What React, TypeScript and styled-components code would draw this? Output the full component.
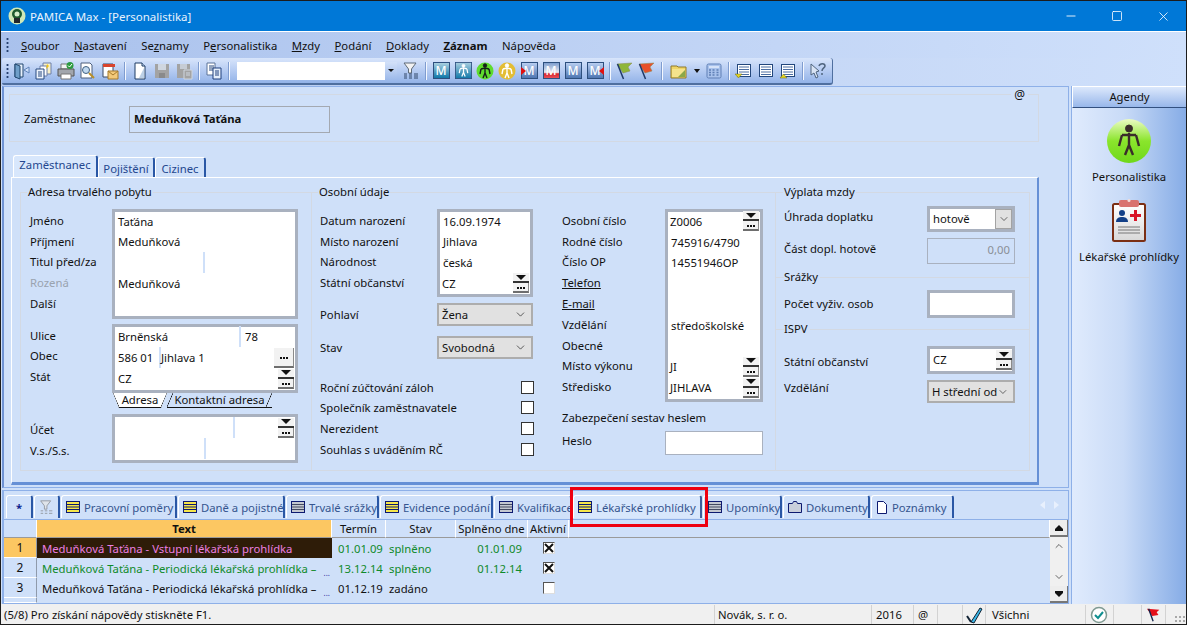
import React from 'react';
import styled, { createGlobalStyle } from 'styled-components';
import { ChevronDown, ChevronUp, Minus, Square, X } from 'lucide-react';

const GlobalStyle = createGlobalStyle`
  html, body { margin: 0; padding: 0; background: #fff; }
  * { box-sizing: border-box; }
  body { font-family: "Noto Sans", "Liberation Sans", sans-serif; font-size: 11.3px; color: #111; }
  fieldset { margin: 0; min-width: 0; }
`;

const panelBg = '#cfe0f9';
const groupLine = '#d3d9e3';

const Window = styled.div`
  width: 1187px;
  height: 625px;
  border: 1px solid #1c1c1c;
  display: flex;
  flex-direction: column;
  overflow: hidden;
  position: relative;
  background: ${panelBg};
`;

/* title bar */
const TitleBar = styled.header`
  height: 30px;
  background: #0078d7;
  color: #fff;
  display: flex;
  align-items: center;
  padding-left: 7px;
  flex-shrink: 0;
`;
const TitleText = styled.span`
  margin-left: 4px;
  font-size: 11.5px;
  color: #e8f2fc;
`;
const WinControls = styled.div`
  margin-left: auto;
  display: flex;
  height: 100%;
`;
const WinButton = styled.div`
  width: 46px;
  display: flex;
  align-items: center;
  justify-content: center;
  color: #fff;
`;

/* menu */
const MenuBar = styled.nav`
  height: 27px;
  flex-shrink: 0;
  border-top: 1px solid #fff;
  background: linear-gradient(90deg, #a9c1ec 0%, #bcd0f3 45%, #cfe0fb 100%);
  display: flex;
  align-items: center;
  padding-left: 5px;
`;
const Grip = styled.i`
  width: 3px;
  height: 16px;
  margin-right: 4px;
  background: radial-gradient(circle, #26406e 1px, transparent 1.2px) 0 0 / 3px 4px;
`;
const ToolGrip = styled(Grip)`
  margin-right: 2px;
`;
const MenuItem = styled.span<{ $bold?: boolean }>`
  margin-left: 8px;
  margin-right: 6.5px;
  font-weight: ${(p) => (p.$bold ? 700 : 400)};
`;

/* toolbar */
const ToolRow = styled.div`
  height: 28px;
  flex-shrink: 0;
  background: linear-gradient(90deg, #b4c9ef 0%, #c4d6f5 60%, #cfe0fb 100%);
  padding-left: 1px;
`;
const Toolbar = styled.div`
  width: 831px;
  height: 27px;
  border-radius: 2px 3px 3px 2px;
  border-right: 1px solid #4f6f9f;
  border-bottom: 2px solid #4f6f9f;
  background: linear-gradient(180deg, #d8e5fb 0%, #b9cef3 45%, #93b3e8 100%);
  display: flex;
  align-items: center;
  padding-left: 4px;
`;
const ToolBtn = styled.div<{ $w?: number }>`
  width: ${(p) => p.$w ?? 22}px;
  height: 22px;
  display: flex;
  align-items: center;
  justify-content: center;
  flex-shrink: 0;
`;
const ToolSep = styled.div`
  width: 8px;
  height: 18px;
  flex-shrink: 0;
  display: flex;
  justify-content: center;
  &::after { content: ''; width: 1px; height: 100%; background: #f4f8ff; box-shadow: -1px 0 0 #7f9ccf; }
`;
const ToolCombo = styled.div`
  width: 160px;
  height: 18px;
  margin: 0 3px 0 4px;
  background: #fff;
  display: flex;
  justify-content: flex-end;
  flex-shrink: 0;
`;
const ToolComboArrow = styled.div`
  width: 12px;
  background: linear-gradient(180deg, #d3e1f9, #9cb9ea);
  display: flex;
  align-items: center;
  justify-content: center;
  &::after { content: ''; border: 3px solid transparent; border-top: 3px solid #111; border-bottom: 0; }
`;
const MTile = styled.div<{ $fill: string }>`
  width: 17px;
  height: 17px;
  border: 1px solid #2d4f7e;
  background: ${(p) => p.$fill};
  color: #fff;
  font-size: 12px;
  line-height: 15px;
  font-weight: 500;
  text-align: center;
  position: relative;
`;
const MMark = styled.i<{ $side: 'left' | 'right' }>`
  position: absolute;
  top: 4px;
  ${(p) => p.$side}: -1px;
  border: 4px solid transparent;
  ${(p) => (p.$side === 'left' ? 'border-left: 5px solid #e01010; border-right: 0;' : 'border-right: 5px solid #e01010; border-left: 0;')}
`;
const MiniArrow = styled.div`
  border: 3px solid transparent;
  border-top: 4px solid #111;
  border-bottom: 0;
`;

/* page layout */
const Body = styled.div`
  flex: 1;
  min-height: 0;
  display: flex;
  padding-left: 1px;
`;
const LeftColumn = styled.div`
  width: 1067px;
  display: flex;
  flex-direction: column;
  gap: 2px;
`;
const MainPanel = styled.section`
  height: 402px;
  border: 1px solid #8eb0e8;
  border-left: 2px solid #6f93d4;
  background: ${panelBg};
  padding: 7px 29px 0 5px;
`;
const EmployeeFrame = styled.div`
  height: 48px;
  border: 1px solid ${groupLine};
  display: flex;
  align-items: center;
  padding: 0 0 0 14px;
  position: relative;
`;
const AtMark = styled.span`
  position: absolute;
  top: -7px;
  right: 10px;
  padding: 0 3px;
  background: ${panelBg};
  line-height: 14px;
  font-size: 12px;
`;
const EmployeeLabel = styled.span`
  width: 105px;
`;
const EmployeeName = styled.div`
  width: 201px;
  height: 27px;
  margin-top: 2px;
  border: 1px solid #a4a9b1;
  font-weight: 700;
  line-height: 24px;
  padding-left: 4px;
`;
const TopTabs = styled.div`
  display: flex;
  height: 22px;
  margin: 13px 0 0 4px;
`;
const TopTab = styled.div<{ $active?: boolean; $w: number }>`
  width: ${(p) => p.$w}px;
  border-top: 1px solid #fff;
  border-left: 1px solid #fff;
  border-right: 2px solid #2a57a5;
  border-radius: 3px 3px 0 0;
  color: #24478f;
  text-align: center;
  line-height: ${(p) => (p.$active ? 18 : 21)}px;
  background: ${(p) => (p.$active ? '#d8e7fc' : panelBg)};
  margin-top: ${(p) => (p.$active ? 0 : 2)}px;
`;
const TabPanel = styled.div`
  margin-left: 2px;
  height: 308px;
  width: 1028px;
  border-top: 1px solid #fff;
  border-left: 1px solid #fff;
  border-right: 2px solid #6690d6;
  border-bottom: 3px solid #6690d6;
  padding: 6px 0 0 8px;
  display: flex;
  align-items: flex-start;
`;
const Group = styled.fieldset<{ $w: number; $pad: number; $overlap?: boolean }>`
  width: ${(p) => p.$w}px;
  height: 287px;
  border: 1px solid ${groupLine};
  padding: 0 0 0 ${(p) => p.$pad}px;
  margin-left: ${(p) => (p.$overlap ? -1 : 0)}px;
`;
const Legend = styled.legend<{ $shift: number }>`
  padding: 0 1px;
  margin-left: ${(p) => p.$shift}px;
  line-height: 16px;
`;

const FormBlock = styled.div<{ $top: number; $label: number }>`
  display: grid;
  grid-template-columns: ${(p) => p.$label}px auto;
  justify-content: start;
  align-items: start;
  margin-top: ${(p) => p.$top}px;
`;
const Rows = styled.div<{ $h: number; $top?: number }>`
  display: grid;
  grid-auto-rows: ${(p) => p.$h}px;
  margin-top: ${(p) => p.$top ?? 0}px;
  align-items: center;
`;
const Label = styled.span<{ $muted?: boolean; $link?: boolean }>`
  display: block;
  white-space: nowrap;
  color: ${(p) => (p.$muted ? '#9aa3af' : '#111')};
  text-decoration: ${(p) => (p.$link ? 'underline' : 'none')};
`;
const FieldBox = styled.div<{ $w: number; $h: number }>`
  width: ${(p) => p.$w}px;
  height: ${(p) => p.$h}px;
  border: 3px solid #a9b1bf;
  background: #fff;
  position: relative;
`;
const FieldRow = styled.div`
  display: flex;
  align-items: center;
  height: 100%;
  padding-right: 1px;
`;
const Value = styled.span<{ $w?: number; $pad?: number }>`
  ${(p) => (p.$w ? `width: ${p.$w}px;` : 'flex: 1;')}
  padding-left: ${(p) => p.$pad ?? 3}px;
  white-space: nowrap;
  align-self: stretch;
  display: flex;
  align-items: center;
`;
const Gap = styled.span<{ $w?: number; $pad?: number }>`
  ${(p) => (p.$w ? `width: ${p.$w}px;` : 'flex: 1;')}
  border-left: 2px solid ${panelBg};
  padding-left: ${(p) => p.$pad ?? 4}px;
  align-self: stretch;
  display: flex;
  align-items: center;
  white-space: nowrap;
`;
const PickerWrap = styled.div`
  width: 16px;
  height: 20px;
  display: flex;
  flex-direction: column;
  flex-shrink: 0;
`;
const PickerTop = styled.div`
  flex: 1;
  background: #f2f2f2;
  border-bottom: 2px solid #333;
  display: flex;
  align-items: center;
  justify-content: center;
  &::after { content: ''; border: 4px solid transparent; border-top: 5px solid #111; border-bottom: 0; border-left-width: 5px; border-right-width: 5px; }
`;
const PickerDots = styled.div<{ $tall?: boolean }>`
  flex: 1;
  width: 16px;
  height: ${(p) => (p.$tall ? '20px' : 'auto')};
  background: #f2f2f2;
  border-right: 1px solid #8b8b8b;
  border-bottom: 2px solid #6e6e6e;
  display: flex;
  align-items: center;
  justify-content: center;
  gap: 1px;
  flex-shrink: 0;
  i { width: 2px; height: 2px; background: #111; margin-top: 2px; }
`;
const Dots = ({ tall }: { tall?: boolean }) => (
  <PickerDots $tall={tall}>
    <i />
    <i />
    <i />
  </PickerDots>
);
const Picker = () => (
  <PickerWrap>
    <PickerTop />
    <Dots />
  </PickerWrap>
);

const AddressTabs = styled.div`
  display: flex;
  height: 15px;
  margin-left: 1px;
`;
const AddressTab = styled.div<{ $active?: boolean; $w: number }>`
  width: ${(p) => p.$w}px;
  position: relative;
  text-align: center;
  line-height: 13px;
  border-bottom: 1px solid #111;
  background: ${(p) => (p.$active ? '#fff' : 'transparent')};
  clip-path: ${(p) => (p.$active ? 'polygon(0 0, 100% 0, calc(100% - 6px) 100%, 6px 100%)' : 'none')};
  &::before, &::after {
    content: '';
    position: absolute;
    top: 0;
    bottom: 0;
    width: 6px;
    background: linear-gradient(to top left, transparent calc(50% - 0.6px), #111 50%, transparent calc(50% + 0.6px));
  }
  &::before {
    left: 0;
    ${(p) => (p.$active ? 'transform: scaleX(-1);' : '')}
  }
  &::after {
    right: 0;
  }
`;

const TwoSides = styled.div`
  display: flex;
  gap: 28px;
`;
const Side = styled.div<{ $w: number }>`
  width: ${(p) => p.$w}px;
`;
const SelectBox = styled.div<{ $w?: number; $top?: number }>`
  width: ${(p) => p.$w ?? 96}px;
  height: 23px;
  margin-top: ${(p) => p.$top ?? 0}px;
  background: #e1e1e1;
  border: 2px solid #adadad;
  display: flex;
  align-items: center;
  justify-content: space-between;
  padding: 0 4px 0 3px;
  white-space: nowrap;
`;
const LineRow = styled.div<{ $top: number; $label: number; $lh: number }>`
  display: grid;
  grid-template-columns: ${(p) => p.$label}px auto;
  justify-content: start;
  align-items: start;
  margin-top: ${(p) => p.$top}px;
  line-height: ${(p) => p.$lh}px;
`;
const CheckList = styled.div`
  margin-top: 17px;
  display: grid;
  grid-auto-rows: 20.6px;
  align-items: center;
`;
const CheckRow = styled.div`
  display: flex;
  justify-content: space-between;
  align-items: center;
  width: 214px;
`;
const CheckSquare = styled.i`
  width: 13px;
  height: 13px;
  border: 1px solid #333;
  background: #fff;
`;
const SideCaption = styled.div`
  margin-top: 7px;
  line-height: 18px;
`;
const PasswordBox = styled.div`
  width: 98px;
  height: 24px;
  background: #fff;
  border: 1px solid #a9b1bf;
`;
const WhiteField = styled.div<{ $h: number; $border?: number }>`
  width: 88px;
  height: ${(p) => p.$h}px;
  border: ${(p) => p.$border ?? 3}px solid #a9b1bf;
  background: #fff;
  display: flex;
  align-items: center;
  line-height: 16px;
  padding-left: 3px;
`;
const ComboButton = styled.div`
  margin-left: auto;
  width: 17px;
  align-self: stretch;
  background: #e1e1e1;
  border: 1px solid #a3a3a3;
  display: flex;
  align-items: center;
  justify-content: center;
`;
const DisabledField = styled.div`
  width: 88px;
  height: 26px;
  border: 1px solid #a9b1bf;
  color: #8a8f97;
  text-align: right;
  padding-right: 4px;
  line-height: 22px;
`;
const SectionLine = styled.div<{ $top: number }>`
  display: flex;
  align-items: center;
  margin: ${(p) => p.$top}px 0 0 -8px;
  line-height: 16px;
  &::before { content: ''; width: 8px; height: 1px; background: ${groupLine}; }
  &::after { content: ''; flex: 1; height: 1px; margin-left: 2px; background: ${groupLine}; }
`;

/* bottom tabs + grid */
const BottomPanel = styled.section`
  flex: 1;
  min-height: 0;
  border: 1px solid #8eb0e8;
  border-left: 2px solid #8eb0e8;
  display: flex;
  flex-direction: column;
  position: relative;
`;
const BottomTabs = styled.div`
  height: 29px;
  padding: 4px 0 1px 2px;
  display: flex;
  gap: 1px;
  flex-shrink: 0;
  border-bottom: 1px solid #8eb0e8;
`;
const BottomTab = styled.div<{ $w: number; $active?: boolean }>`
  width: ${(p) => p.$w}px;
  border-top: 1px solid #fff;
  border-left: 1px solid #fff;
  border-right: 2px solid ${(p) => (p.$active ? '#3e5f9c' : '#2a57a5')};
  border-radius: 3px 3px 0 0;
  display: flex;
  align-items: center;
  justify-content: ${(p) => (p.$w < 30 ? 'center' : 'flex-start')};
  padding-left: ${(p) => (p.$w < 30 ? 0 : 4)}px;
  gap: 4px;
  color: #35558f;
  overflow: hidden;
  white-space: nowrap;
  background: ${(p) => (p.$active ? '#d8e7fc' : panelBg)};
`;
const Star = styled.span`
  color: #0b1f8f;
  font-weight: 700;
`;
const TabArrows = styled.div`
  margin-left: auto;
  display: flex;
  gap: 9px;
  padding: 6px 9px 0 0;
`;
const TabArrow = styled.i<{ $dir: 'left' | 'right' }>`
  height: 0;
  border: 4px solid transparent;
  ${(p) => (p.$dir === 'left' ? 'border-right: 5px solid #e8f0fd; border-left: 0;' : 'border-left: 5px solid #e8f0fd; border-right: 0;')}
`;
const Highlight = styled.div`
  position: absolute;
  left: 566px;
  top: -4px;
  width: 138px;
  height: 40px;
  border: 3px solid #ee0010;
  pointer-events: none;
`;
const GridArea = styled.div`
  flex: 1;
  min-height: 0;
  display: flex;
`;
const Table = styled.div`
  flex: 1;
  display: grid;
  grid-template-columns: 33px 295px 54px 70px 72px 41px 1fr;
  grid-template-rows: 18px 20px 20px 20px 5px;
`;
const HeadCell = styled.div<{ $sel?: boolean }>`
  background: ${(p) => (p.$sel ? '#fcc762' : panelBg)};
  color: #111;
  font-weight: ${(p) => (p.$sel ? 700 : 400)};
  border-right: 1px solid #fff;
  border-bottom: 1px solid #9a9a9a;
  display: flex;
  align-items: center;
  justify-content: center;
  white-space: nowrap;
`;
const RowHead = styled.div<{ $sel?: boolean }>`
  background: ${(p) => (p.$sel ? '#fcc762' : panelBg)};
  border-right: 1px solid #8f9aab;
  border-bottom: 1px solid #fff;
  display: flex;
  align-items: center;
  justify-content: center;
  font-size: 12px;
`;
const TextCell = styled.div<{ $sel?: boolean; $color: string }>`
  background: ${(p) => (p.$sel ? '#2e1c08' : 'transparent')};
  color: ${(p) => p.$color};
  padding-left: 5px;
  white-space: nowrap;
  overflow: hidden;
  display: flex;
  align-items: center;
`;
const Clip = styled.span`
  margin-left: auto;
  margin-right: 2px;
  align-self: flex-end;
  font-size: 8px;
  line-height: 10px;
  color: #1f2f9f;
`;
const Cell = styled.div<{ $color: string; $align?: string; $pad?: number }>`
  color: ${(p) => p.$color};
  padding: 0 ${(p) => p.$pad ?? 0}px;
  display: flex;
  align-items: center;
  justify-content: ${(p) => p.$align ?? 'flex-start'};
  white-space: nowrap;
`;
const GridCheck = styled.i`
  width: 12px;
  height: 12px;
  background: #fff;
  border: 1px solid #555;
  border-right-color: #ddd;
  border-bottom-color: #ddd;
  display: flex;
  align-items: center;
  justify-content: center;
`;
const ScrollBar = styled.div`
  width: 18px;
  background: #f0f0f0;
  display: flex;
  flex-direction: column;
  align-items: center;
`;
const ScrollEnd = styled.div`
  width: 100%;
  height: 17px;
  background: #ededed;
  border-right: 1px solid #777;
  border-bottom: 2px solid #777;
  display: flex;
  align-items: center;
  justify-content: center;
  font-size: 9px;
  flex-direction: column;
`;
const ScrollEndBar = styled.i`
  width: 8px;
  height: 2px;
  background: #111;
`;
const ScrollEndTri = styled.i<{ $up?: boolean }>`
  border: 4px solid transparent;
  ${(p) => (p.$up ? 'border-bottom: 4px solid #111; border-top: 0;' : 'border-top: 4px solid #111; border-bottom: 0;')}
`;
const ScrollMid = styled.div`
  flex: 1;
  display: flex;
  flex-direction: column;
  justify-content: space-between;
  padding: 3px 0;
  color: #666;
`;

/* right side */
const AgendaPanel = styled.aside`
  width: 116px;
  margin-left: 2px;
  border-left: 1px solid #8eb0e8;
  background: linear-gradient(90deg, #e0ebfd 0%, #c9dbf7 45%, #86ace6 100%);
  display: flex;
  flex-direction: column;
  align-items: center;
`;
const AgendaHead = styled.div`
  width: 100%;
  height: 22px;
  border-top: 1px solid #fff;
  border-left: 1px solid #fff;
  border-bottom: 1px solid #33507f;
  background: linear-gradient(180deg, #dce8fc, #98b7ea);
  text-align: center;
  line-height: 20px;
`;
const AgendaItem = styled.div<{ $top: number; $gap: number }>`
  margin-top: ${(p) => p.$top}px;
  display: flex;
  flex-direction: column;
  align-items: center;
  gap: ${(p) => p.$gap}px;
  white-space: nowrap;
`;

/* status bar */
const StatusBar = styled.footer`
  height: 20px;
  flex-shrink: 0;
  background: #f0f0f0;
  display: flex;
  align-items: stretch;
  line-height: 20px;
  padding-top: 1px;
`;
const StatusCell = styled.div<{ $w?: number; $pad?: number }>`
  ${(p) => (p.$w ? `width: ${p.$w}px;` : 'flex: 1;')}
  padding-left: ${(p) => p.$pad ?? 4}px;
  border-right: 1px solid #d2d2d2;
  display: flex;
  align-items: center;
  white-space: nowrap;
  flex-shrink: 0;
`;
const StatusGrip = styled.div`
  flex: 1;
  background: radial-gradient(circle, #a8a8a8 1px, transparent 1.2px) 0 0 / 4px 4px;
  margin: 10px 1px 0 8px;
`;

/* icons */
const DoorIcon = () => (
  <svg width="18" height="18" viewBox="0 0 18 18">
    <path d="M2 2h8v13H2z" fill="#e7f0fb" stroke="#21476f" />
    <path d="M2 2l5 2v13l-5-2z" fill="#6f9fc9" stroke="#21476f" />
    <path d="M16 5l-5 3 5 3z" fill="#cfe0f9" stroke="#5d82b8" />
  </svg>
);
const DocsIcon = () => (
  <svg width="18" height="18" viewBox="0 0 18 18">
    <path d="M8 1h8v11H8z" fill="#f6efc9" stroke="#6c7ea8" />
    <path d="M5 4h7v10H5z" fill="#fff" stroke="#6c7ea8" />
    <path d="M1 7h8v10H1z" fill="#eef4fd" stroke="#27497e" />
    <path d="M3 10h4M3 12h4M3 14h4" stroke="#27497e" />
    <path d="M12 2l2 2-3 3z" fill="#f1c40f" />
  </svg>
);
const PrinterIcon = () => (
  <svg width="18" height="18" viewBox="0 0 18 18">
    <path d="M4 2h9v5H4z" fill="#f4f4f4" stroke="#777" />
    <path d="M1 7h16v7H1z" fill="#a2a6ad" stroke="#555" />
    <path d="M4 12h10v5H4z" fill="#fff" stroke="#777" />
    <circle cx="13" cy="3.500" r="3.500" fill="#2c9a3e" />
    <path d="M11 3.500l1.500 1.500 2.500-3" stroke="#fff" fill="none" />
  </svg>
);
const PreviewIcon = () => (
  <svg width="18" height="18" viewBox="0 0 18 18">
    <path d="M2 1h9l2 2v13H2z" fill="#fff" stroke="#4d5f7c" />
    <circle cx="7" cy="8" r="3.500" fill="#bfd8f0" stroke="#3f5f80" />
    <path d="M10 11l5 5" stroke="#b98f2a" strokeWidth="2" />
  </svg>
);
const MailIcon = () => (
  <svg width="18" height="18" viewBox="0 0 18 18">
    <path d="M2 2h10v13H2z" fill="#fff" stroke="#3a4a66" />
    <path d="M2 2h12v3H2z" fill="#d8442e" />
    <path d="M7 9h10v8H7z" fill="#f2c97a" stroke="#a67a2c" />
    <path d="M7 9l5 4 5-4" fill="none" stroke="#a67a2c" />
  </svg>
);
const PageIcon = () => (
  <svg width="18" height="18" viewBox="0 0 18 18">
    <path d="M4 1h7l3 3v13H4z" fill="#fff" stroke="#1f3c64" />
    <path d="M11 1v3h3" fill="#cfe0f9" stroke="#1f3c64" />
    <path d="M13 6v10H8z" fill="#bcd0e6" />
  </svg>
);
const SaveIcon = () => (
  <svg width="18" height="18" viewBox="0 0 18 18">
    <path d="M2 2h14v14H2z" fill="#a3a3a3" />
    <path d="M5 2h8v6H5z" fill="#cfd6e0" />
    <path d="M6 11h6v5H6z" fill="#8a8a8a" />
  </svg>
);
const SaveAsIcon = () => (
  <svg width="18" height="18" viewBox="0 0 18 18">
    <path d="M2 2h13v14H2z" fill="#a3a3a3" />
    <path d="M5 2h7v5H5z" fill="#c6ccd5" />
    <path d="M9 8h8v9H9z" fill="#a3a3a3" stroke="#cfd6e0" />
    <path d="M11 11h4M11 13h4" stroke="#cfd6e0" />
  </svg>
);
const CopyIcon = () => (
  <svg width="18" height="18" viewBox="0 0 18 18">
    <path d="M2 1h8v12H2z" fill="#fff" stroke="#5b7298" />
    <path d="M4 4h5M4 6h5M4 8h5" stroke="#27497e" />
    <path d="M8 6h8v11H8z" fill="#e4eefb" stroke="#1e3f7d" />
    <path d="M10 9h4M10 11h4M10 13h4" stroke="#1e3f7d" />
  </svg>
);
const FilterIcon = () => (
  <svg width="18" height="18" viewBox="0 0 18 18">
    <path d="M2 1h12L9.500 7v4h-3V7z" fill="#f2f2f2" stroke="#5f6b78" />
    <path d="M2 12h3M7 12h3M12 12h4M2 14h3M7 14h3M12 14h4M2 16h3M7 16h3M12 16h4" stroke="#33486a" />
  </svg>
);
const Figure = ({ color }: { color: string }) => (
  <g fill={color} stroke={color}>
    <circle cx="10" cy="4.500" r="1.700" />
    <path d="M10 7v6M6 8l4-1 4 1M6 8l-1 5M14 8l1 5M10 12l-2 5M10 12l2 5" fill="none" strokeWidth="1.400" />
  </g>
);
const PersonRound = ({ bg, color }: { bg: string; color: string }) => (
  <svg width="20" height="20" viewBox="0 0 20 20">
    <circle cx="10" cy="10" r="8.500" fill={bg} />
    <Figure color={color} />
  </svg>
);
const PersonSquare = () => (
  <svg width="17" height="17" viewBox="0 0 20 20">
    <defs>
      <linearGradient id="tealTile" x1="0" y1="0" x2="0" y2="1">
        <stop offset="0" stopColor="#a9cfe0" />
        <stop offset="1" stopColor="#0f77a8" />
      </linearGradient>
    </defs>
    <rect x="0.500" y="0.500" width="19" height="19" fill="url(#tealTile)" stroke="#2d4f7e" />
    <Figure color="#fff" />
  </svg>
);
const FlagIcon = ({ color }: { color: string }) => (
  <svg width="18" height="18" viewBox="0 0 18 18">
    <path d="M1 2l15-1-4 4 2 4-7 2z" fill={color} stroke="#8a8a50" strokeWidth="0.500" />
    <path d="M1.500 2l6 15" stroke="#1e3868" strokeWidth="1.500" />
  </svg>
);
const FolderIcon = () => (
  <svg width="18" height="18" viewBox="0 0 18 18">
    <path d="M1 4h6l1 1h8v11H1z" fill="#efd566" stroke="#8f7a2c" />
    <path d="M2 7h13v8H2z" fill="#f5e48c" />
    <path d="M8 15l7-7v7z" fill="#8ba84a" />
  </svg>
);
const CalcIcon = () => (
  <svg width="16" height="16" viewBox="0 0 16 16">
    <rect x="1" y="1" width="14" height="14" rx="1.500" fill="#a9c2ec" stroke="#5f7fb5" />
    <path d="M3 3h10v2H3z" fill="#d5e2f8" />
    <path d="M3 7h2M6.500 7h2M10.500 7h2M3 9.500h2M6.500 9.500h2M10.500 9.500h2M3 12h2M6.500 12h2M10.500 12h2" stroke="#5f7fb5" strokeWidth="1.500" />
  </svg>
);
const ListIcon = ({ mark }: { mark?: 'down' | 'up' }) => (
  <svg width="18" height="18" viewBox="0 0 18 18">
    <rect x="2.500" y="2.500" width="13" height="12" fill="#fff" stroke="#23477c" />
    <path d="M4 5h10M4 7.500h10M4 10h10M4 12.500h10" stroke="#4d6fa3" />
    {mark === 'down' && <path d="M0 12h7l-3.500 4z" fill="#e3d21e" stroke="#6b6a20" strokeWidth="0.500" />}
    {mark === 'up' && <path d="M1 16h7l-3.500-4z" fill="#e3d21e" stroke="#6b6a20" strokeWidth="0.500" />}
  </svg>
);
const HelpIcon = () => (
  <svg width="18" height="18" viewBox="0 0 18 18">
    <path d="M2 2l8 7-3 1 2 5-2 1-2-5-3 2z" fill="#d9e4f5" stroke="#50657f" />
    <path d="M10 4c1-3 6-3 6 0 0 2-3 2-3 5M13 11v2" fill="none" stroke="#50657f" strokeWidth="1.500" />
  </svg>
);
const LinesIcon = ({ fill, stripe }: { fill: string; stripe: string }) => (
  <svg width="14" height="12" viewBox="0 0 14 12" style={{ flexShrink: 0 }}>
    <rect x="0.500" y="0.500" width="13" height="11" fill={fill} stroke="#0d1a70" />
    <path d="M1 3.500h12M1 6h12M1 8.500h12" stroke={stripe} />
  </svg>
);
const FolderTabIcon = () => (
  <svg width="14" height="12" viewBox="0 0 14 12" style={{ flexShrink: 0 }}>
    <path d="M.5 2.500h4l1-2h3l1 2h4v9H.5z" fill="#c9cfdb" stroke="#0d1a70" />
  </svg>
);
const NoteTabIcon = () => (
  <svg width="12" height="13" viewBox="0 0 12 13" style={{ flexShrink: 0 }}>
    <path d="M1.500.5h6l3 3v9h-9z" fill="#fff" stroke="#0d1a70" />
  </svg>
);
const FilterTabIcon = () => (
  <svg width="15" height="15" viewBox="0 0 18 18">
    <path d="M2 1h12L9.500 7v4h-3V7z" fill="#dfe4ea" stroke="#8a8f96" />
    <path d="M2 13h3M7 13h3M12 13h4M2 16h3M7 16h3M12 16h4" stroke="#8a8f96" />
  </svg>
);
const AppLogo = () => (
  <svg width="18" height="18" viewBox="0 0 18 18">
    <circle cx="9" cy="9" r="8.500" fill="#cfe8b8" />
    <circle cx="9" cy="7" r="5" fill="#1d5a2f" />
    <circle cx="9" cy="7" r="2.500" fill="#d6eecb" />
    <rect x="6" y="11" width="6" height="5" fill="#23262a" />
  </svg>
);
const XMark = () => (
  <svg width="10" height="10" viewBox="0 0 10 10">
    <path d="M1 1l8 8M9 1l-8 8" stroke="#111" strokeWidth="2" />
  </svg>
);
const CheckPen = () => (
  <svg width="18" height="18" viewBox="0 0 18 18">
    <path d="M6 16L15 2l2 1-8 14z" fill="#39b6e6" stroke="#123" />
    <path d="M2 10l4 6" stroke="#123" strokeWidth="2" />
  </svg>
);
const RoundCheck = () => (
  <svg width="18" height="18" viewBox="0 0 18 18">
    <circle cx="9" cy="9" r="7.500" fill="#fff" stroke="#7f9a92" strokeWidth="1.500" />
    <path d="M5 9l3 3 5-6" fill="none" stroke="#0f8f8f" strokeWidth="2" />
  </svg>
);
const StatusFlag = () => (
  <svg width="16" height="18" viewBox="0 0 18 18">
    <path d="M1 2l14 1-3 3 2 3-7 1z" fill="#e5101a" />
    <path d="M3 2l5 14" stroke="#10204a" strokeWidth="1.500" />
  </svg>
);
const AgendaPerson = () => (
  <svg width="46" height="46" viewBox="0 0 46 46">
    <defs>
      <linearGradient id="agendaGreen" x1="0" y1="0" x2="0" y2="1">
        <stop offset="0" stopColor="#ecfbc4" />
        <stop offset="0.500" stopColor="#8ae52c" />
        <stop offset="1" stopColor="#6fd81a" />
      </linearGradient>
    </defs>
    <circle cx="23" cy="23" r="22" fill="url(#agendaGreen)" />
    <g fill="#3a2d2a" stroke="#3a2d2a">
      <circle cx="23" cy="10.500" r="3.500" />
      <path d="M23 15v14M16 17h14M16 17l-3 11M30 17l3 11M23 27l-4 10M23 27l4 10" fill="none" strokeWidth="2.400" />
    </g>
  </svg>
);
const ClipboardIcon = () => (
  <svg width="36" height="44" viewBox="0 0 36 44">
    <defs>
      <linearGradient id="clipPaper" x1="0" y1="0" x2="0" y2="1">
        <stop offset="0" stopColor="#ffffff" />
        <stop offset="1" stopColor="#d8d8d8" />
      </linearGradient>
    </defs>
    <rect x="2" y="6" width="32" height="37" rx="1.500" fill="url(#clipPaper)" stroke="#7b2f14" strokeWidth="2" />
    <rect x="8" y="2" width="20" height="7" rx="2" fill="#d9726e" />
    <circle cx="18" cy="2.500" r="1.500" fill="#f4dcd8" />
    <circle cx="11" cy="15" r="3" fill="#123f87" />
    <path d="M5 24c0-4 3-5 6-5s6 1 6 5z" fill="#123f87" />
    <path d="M19 16h4v-4h3v4h4v3h-4v4h-3v-4h-4z" fill="#d81528" />
    <path d="M7 29h22M7 32h22M7 35h22" stroke="#777" />
  </svg>
);

const menu: [string, string, string, boolean?][] = [
  ['', 'S', 'oubor'],
  ['', 'N', 'astavení'],
  ['Se', 'z', 'namy'],
  ['P', 'e', 'rsonalistika'],
  ['', 'M', 'zdy'],
  ['', 'P', 'odání'],
  ['', 'D', 'oklady'],
  ['', 'Z', 'áznam', true],
  ['Náp', 'o', 'věda'],
];

const yellow = { fill: '#f6e64a', stripe: '#0d1a70' };
const gray = { fill: '#c4c8d0', stripe: '#444a60' };

const tileBlue = 'linear-gradient(180deg, #b7cdf0, #4e76b2)';
const tileTeal = 'linear-gradient(180deg, #a9cfe0, #0f77a8)';
const tileRed = 'linear-gradient(180deg, #7f9fcf 0%, #e8e8f0 62%, #d8252c 72%, #e8505a 100%)';

const tabs = [
  { t: 'Pracovní poměry', w: 116, icon: yellow },
  { t: 'Daně a pojistné', w: 107, icon: yellow },
  { t: 'Trvalé srážky', w: 93, icon: gray },
  { t: 'Evidence podání', w: 113, icon: yellow },
  { t: 'Kvalifikace', w: 78, icon: gray },
];

const gridRows = [
  { n: '1', sel: true, color: '#0f8a2a', textColor: '#ec7fe0', text: 'Meduňková Taťána - Vstupní lékařská prohlídka', term: '01.01.09', stav: 'splněno', done: '01.01.09', on: true },
  { n: '2', color: '#0f8a2a', textColor: '#0f8a2a', text: 'Meduňková Taťána - Periodická lékařská prohlídka –', clip: true, term: '13.12.14', stav: 'splněno', done: '01.12.14', on: true },
  { n: '3', color: '#111', textColor: '#111', text: 'Meduňková Taťána - Periodická lékařská prohlídka –', clip: true, term: '01.12.19', stav: 'zadáno', done: '', on: false },
];

const App = () => (
  <>
    <GlobalStyle />
    <Window>
      <TitleBar>
        <AppLogo />
        <TitleText>PAMICA Max - [Personalistika]</TitleText>
        <WinControls>
          <WinButton><Minus size={14} strokeWidth={1.5} /></WinButton>
          <WinButton><Square size={12} strokeWidth={1.6} /></WinButton>
          <WinButton><X size={15} strokeWidth={1.3} /></WinButton>
        </WinControls>
      </TitleBar>

      <MenuBar>
        <Grip />
        {menu.map(([a, u, b, bold]) => (
          <MenuItem key={a + u + b} $bold={bold}>
            {a}<u>{u}</u>{b}
          </MenuItem>
        ))}
      </MenuBar>

      <ToolRow>
        <Toolbar>
          <ToolGrip />
          <ToolBtn><DoorIcon /></ToolBtn>
          <ToolBtn><DocsIcon /></ToolBtn>
          <ToolBtn><PrinterIcon /></ToolBtn>
          <ToolBtn><PreviewIcon /></ToolBtn>
          <ToolBtn><MailIcon /></ToolBtn>
          <ToolSep />
          <ToolBtn><PageIcon /></ToolBtn>
          <ToolBtn><SaveIcon /></ToolBtn>
          <ToolBtn><SaveAsIcon /></ToolBtn>
          <ToolSep />
          <ToolBtn><CopyIcon /></ToolBtn>
          <ToolSep />
          <ToolCombo><ToolComboArrow /></ToolCombo>
          <ToolBtn><FilterIcon /></ToolBtn>
          <ToolSep />
          <ToolBtn><MTile $fill={tileTeal}>M</MTile></ToolBtn>
          <ToolBtn><PersonSquare /></ToolBtn>
          <ToolBtn><PersonRound bg="#5fdc2e" color="#16201a" /></ToolBtn>
          <ToolBtn><PersonRound bg="#e3bd35" color="#fff" /></ToolBtn>
          <ToolBtn><MTile $fill={tileBlue}>M<MMark $side="left" /></MTile></ToolBtn>
          <ToolBtn><MTile $fill={tileRed}>M</MTile></ToolBtn>
          <ToolBtn><MTile $fill={tileBlue}>M</MTile></ToolBtn>
          <ToolBtn><MTile $fill={tileBlue}>M<MMark $side="right" /></MTile></ToolBtn>
          <ToolSep />
          <ToolBtn><FlagIcon color="#8fb63a" /></ToolBtn>
          <ToolBtn><FlagIcon color="#e8502a" /></ToolBtn>
          <ToolSep />
          <ToolBtn $w={25}><FolderIcon /></ToolBtn>
          <ToolBtn $w={12}><MiniArrow /></ToolBtn>
          <ToolBtn><CalcIcon /></ToolBtn>
          <ToolSep />
          <ToolBtn><ListIcon mark="down" /></ToolBtn>
          <ToolBtn><ListIcon /></ToolBtn>
          <ToolBtn><ListIcon mark="up" /></ToolBtn>
          <ToolSep />
          <ToolBtn><HelpIcon /></ToolBtn>
        </Toolbar>
      </ToolRow>

      <Body>
        <LeftColumn>
          <MainPanel>
            <EmployeeFrame>
              <AtMark>@</AtMark>
              <EmployeeLabel>Zaměstnanec</EmployeeLabel>
              <EmployeeName>Meduňková Taťána</EmployeeName>
            </EmployeeFrame>

            <TopTabs>
              <TopTab $active $w={85}>Zaměstnanec</TopTab>
              <TopTab $w={57}>Pojištění</TopTab>
              <TopTab $w={51}>Cizinec</TopTab>
            </TopTabs>

            <TabPanel>
              <Group $w={292} $pad={9}>
                <Legend $shift={-3}>Adresa trvalého pobytu</Legend>
                <FormBlock $top={9} $label={82}>
                  <Rows $h={20.6} $top={1.5}>
                    <Label>Jméno</Label>
                    <Label>Příjmení</Label>
                    <Label>Titul před/za</Label>
                    <Label $muted>Rozená</Label>
                    <Label>Další</Label>
                  </Rows>
                  <FieldBox $w={186} $h={110}>
                    <Rows $h={20.6} $top={-1}>
                      <FieldRow><Value>Taťána</Value></FieldRow>
                      <FieldRow><Value>Meduňková</Value></FieldRow>
                      <FieldRow><Value $w={88} /><Gap /></FieldRow>
                      <FieldRow><Value>Meduňková</Value></FieldRow>
                      <FieldRow />
                    </Rows>
                  </FieldBox>
                </FormBlock>
                <FormBlock $top={5} $label={82}>
                  <Rows $h={20.6} $top={1}>
                    <Label>Ulice</Label>
                    <Label>Obec</Label>
                    <Label>Stát</Label>
                  </Rows>
                  <div>
                    <FieldBox $w={186} $h={69}>
                      <Rows $h={21} $top={-1}>
                        <FieldRow><Value $w={124}>Brněnská</Value><Gap>78</Gap></FieldRow>
                        <FieldRow>
                          <Value $w={44}>586 01</Value>
                          <Gap $w={115} $pad={0}>Jihlava 1</Gap>
                          <Dots tall />
                        </FieldRow>
                        <FieldRow><Value>CZ</Value><Picker /></FieldRow>
                      </Rows>
                    </FieldBox>
                    <AddressTabs>
                      <AddressTab $active $w={54}>Adresa</AddressTab>
                      <AddressTab $w={105}>Kontaktní adresa</AddressTab>
                    </AddressTabs>
                  </div>
                </FormBlock>
                <FormBlock $top={6} $label={82}>
                  <Rows $h={21} $top={5}>
                    <Label>Účet</Label>
                    <Label>V.s./S.s.</Label>
                  </Rows>
                  <FieldBox $w={186} $h={49}>
                    <Rows $h={21}>
                      <FieldRow><Value $w={118} /><Gap /><Picker /></FieldRow>
                      <FieldRow><Value $w={89} /><Gap /></FieldRow>
                    </Rows>
                  </FieldBox>
                </FormBlock>
              </Group>

              <Group $w={465} $pad={8} $overlap>
                <Legend $shift={-2}>Osobní údaje</Legend>
                <TwoSides>
                  <Side $w={214}>
                    <FormBlock $top={9} $label={117}>
                      <Rows $h={20.6} $top={1.5}>
                        <Label>Datum narození</Label>
                        <Label>Místo narození</Label>
                        <Label>Národnost</Label>
                        <Label>Státní občanství</Label>
                      </Rows>
                      <FieldBox $w={96} $h={88}>
                        <Rows $h={20.6} $top={-1}>
                          <FieldRow><Value>16.09.1974</Value></FieldRow>
                          <FieldRow><Value>Jihlava</Value></FieldRow>
                          <FieldRow><Value>česká</Value></FieldRow>
                          <FieldRow><Value $pad={2}>CZ</Value><Picker /></FieldRow>
                        </Rows>
                      </FieldBox>
                    </FormBlock>
                    <LineRow $top={6} $label={117} $lh={24}>
                      <Label>Pohlaví</Label>
                      <SelectBox>Žena<ChevronDown size={13} strokeWidth={1.2} /></SelectBox>
                    </LineRow>
                    <LineRow $top={9} $label={117} $lh={24}>
                      <Label>Stav</Label>
                      <SelectBox>Svobodná<ChevronDown size={13} strokeWidth={1.2} /></SelectBox>
                    </LineRow>
                    <CheckList>
                      <CheckRow><Label>Roční zúčtování záloh</Label><CheckSquare /></CheckRow>
                      <CheckRow><Label>Společník zaměstnavatele</Label><CheckSquare /></CheckRow>
                      <CheckRow><Label>Nerezident</Label><CheckSquare /></CheckRow>
                      <CheckRow><Label>Souhlas s uváděním RČ</Label><CheckSquare /></CheckRow>
                    </CheckList>
                  </Side>
                  <Side $w={201}>
                    <FormBlock $top={9} $label={103}>
                      <Rows $h={20.8} $top={1}>
                        <Label>Osobní číslo</Label>
                        <Label>Rodné číslo</Label>
                        <Label>Číslo OP</Label>
                        <Label $link>Telefon</Label>
                        <Label $link>E-mail</Label>
                        <Label>Vzdělání</Label>
                        <Label>Obecné</Label>
                        <Label>Místo výkonu</Label>
                        <Label>Středisko</Label>
                      </Rows>
                      <FieldBox $w={98} $h={193}>
                        <Rows $h={20.8} $top={-1}>
                          <FieldRow><Value $pad={2}>Z0006</Value><Picker /></FieldRow>
                          <FieldRow><Value>745916/4790</Value></FieldRow>
                          <FieldRow><Value>14551946OP</Value></FieldRow>
                          <FieldRow />
                          <FieldRow />
                          <FieldRow><Value>středoškolské</Value></FieldRow>
                          <FieldRow />
                          <FieldRow><Value $pad={2}>JI</Value><Picker /></FieldRow>
                          <FieldRow><Value $pad={2}>JIHLAVA</Value><Picker /></FieldRow>
                        </Rows>
                      </FieldBox>
                    </FormBlock>
                    <SideCaption>Zabezpečení sestav heslem</SideCaption>
                    <LineRow $top={4} $label={103} $lh={20}>
                      <Label>Heslo</Label>
                      <PasswordBox />
                    </LineRow>
                  </Side>
                </TwoSides>
              </Group>

              <Group $w={255} $pad={8} $overlap>
                <Legend $shift={-1}>Výplata mzdy</Legend>
                <LineRow $top={6} $label={143} $lh={22}>
                  <Label>Úhrada doplatku</Label>
                  <WhiteField $h={26}>hotově<ComboButton><ChevronDown size={12} strokeWidth={1.2} /></ComboButton></WhiteField>
                </LineRow>
                <LineRow $top={6} $label={143} $lh={22}>
                  <Label>Část dopl. hotově</Label>
                  <DisabledField>0,00</DisabledField>
                </LineRow>
                <SectionLine $top={5}>Srážky</SectionLine>
                <LineRow $top={5} $label={143} $lh={28}>
                  <Label>Počet vyživ. osob</Label>
                  <WhiteField $h={28} />
                </LineRow>
                <SectionLine $top={3}>ISPV</SectionLine>
                <LineRow $top={9} $label={143} $lh={32}>
                  <Label>Státní občanství</Label>
                  <WhiteField $h={28}>CZ<span style={{ flex: 1 }} /><Picker /></WhiteField>
                </LineRow>
                <LineRow $top={2} $label={143} $lh={16}>
                  <Label>Vzdělání</Label>
                  <SelectBox $w={88}>H střední od<ChevronDown size={12} strokeWidth={1.2} /></SelectBox>
                </LineRow>
              </Group>
            </TabPanel>
          </MainPanel>

          <BottomPanel>
            <BottomTabs>
              <BottomTab $w={27}><Star>*</Star></BottomTab>
              <BottomTab $w={26}><FilterTabIcon /></BottomTab>
              {tabs.map((t) => (
                <BottomTab key={t.t} $w={t.w}>
                  <LinesIcon fill={t.icon.fill} stripe={t.icon.stripe} />
                  {t.t}
                </BottomTab>
              ))}
              <BottomTab $active $w={129}>
                <LinesIcon fill={yellow.fill} stripe={yellow.stripe} />
                Lékařské prohlídky
              </BottomTab>
              <BottomTab $w={79}><LinesIcon fill={gray.fill} stripe={gray.stripe} />Upomínky</BottomTab>
              <BottomTab $w={87}><FolderTabIcon />Dokumenty</BottomTab>
              <BottomTab $w={83}><NoteTabIcon />Poznámky</BottomTab>
              <TabArrows>
                <TabArrow $dir="left" />
                <TabArrow $dir="right" />
              </TabArrows>
            </BottomTabs>
            <Highlight />
            <GridArea>
              <Table>
                <HeadCell />
                <HeadCell $sel>Text</HeadCell>
                <HeadCell>Termín</HeadCell>
                <HeadCell>Stav</HeadCell>
                <HeadCell>Splněno dne</HeadCell>
                <HeadCell>Aktivní</HeadCell>
                <HeadCell />
                {gridRows.map((r) => (
                  <React.Fragment key={r.n}>
                    <RowHead $sel={r.sel}>{r.n}</RowHead>
                    <TextCell $sel={r.sel} $color={r.textColor}>
                      {r.text}
                      {r.clip && <Clip>...</Clip>}
                    </TextCell>
                    <Cell $color={r.color} $pad={6}>{r.term}</Cell>
                    <Cell $color={r.color} $pad={3}>{r.stav}</Cell>
                    <Cell $color={r.color} $align="flex-end" $pad={6}>{r.done}</Cell>
                    <Cell $color={r.color} $align="center">
                      <GridCheck>{r.on && <XMark />}</GridCheck>
                    </Cell>
                    <div />
                  </React.Fragment>
                ))}
                <RowHead />
              </Table>
              <ScrollBar>
                <ScrollEnd><ScrollEndTri $up /><ScrollEndBar /></ScrollEnd>
                <ScrollMid>
                  <ChevronUp size={12} strokeWidth={2} />
                  <ChevronDown size={12} strokeWidth={2} />
                </ScrollMid>
                <ScrollEnd><ScrollEndBar /><ScrollEndTri /></ScrollEnd>
              </ScrollBar>
            </GridArea>
          </BottomPanel>
        </LeftColumn>

        <AgendaPanel>
          <AgendaHead>Agendy</AgendaHead>
          <AgendaItem $top={10} $gap={5}>
            <AgendaPerson />
            Personalistika
          </AgendaItem>
          <AgendaItem $top={14} $gap={7}>
            <ClipboardIcon />
            Lékařské prohlídky
          </AgendaItem>
        </AgendaPanel>
      </Body>

      <StatusBar>
        <StatusCell $w={714} $pad={3}>(5/8) Pro získání nápovědy stiskněte F1.</StatusCell>
        <StatusCell $w={157} $pad={3}>Novák, s. r. o.</StatusCell>
        <StatusCell $w={42}>2016</StatusCell>
        <StatusCell $w={24}>@</StatusCell>
        <StatusCell $w={25} />
        <StatusCell $w={23} $pad={2}><CheckPen /></StatusCell>
        <StatusCell $w={100} $pad={6}>Všichni</StatusCell>
        <StatusCell $w={28} $pad={4}><RoundCheck /></StatusCell>
        <StatusCell $w={28} />
        <StatusCell $w={24} $pad={4}><StatusFlag /></StatusCell>
        <StatusGrip />
      </StatusBar>
    </Window>
  </>
);

export default App;
